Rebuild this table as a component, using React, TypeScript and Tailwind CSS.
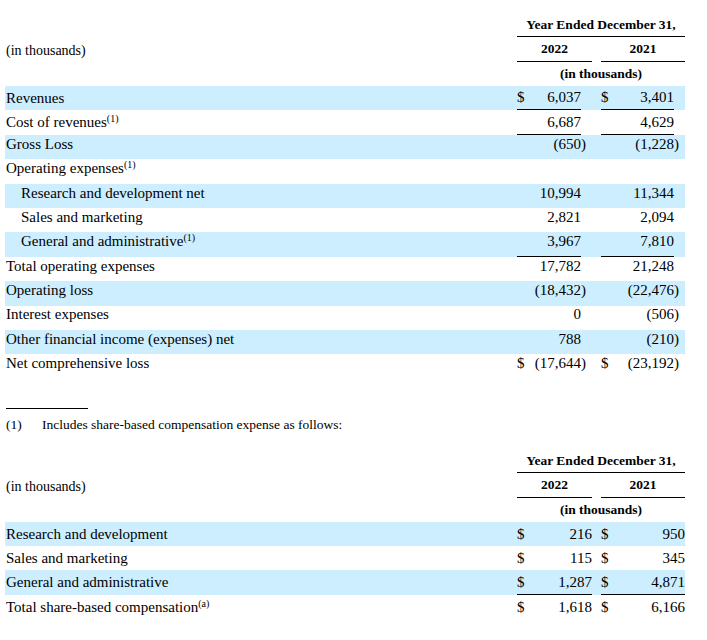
import React from 'react';

type Val = { s?: boolean; v: string; neg?: boolean; ul?: boolean };
type Row = { label: string; sup?: string; indent?: boolean; a?: Val; b?: Val };

const mainRows: Row[] = [
  { label: 'Revenues', a: { s: true, v: '6,037', ul: true }, b: { s: true, v: '3,401', ul: true } },
  { label: 'Cost of revenues', sup: '(1)', a: { v: '6,687', ul: true }, b: { v: '4,629', ul: true } },
  { label: 'Gross Loss', a: { v: '(650', neg: true }, b: { v: '(1,228', neg: true } },
  { label: 'Operating expenses', sup: '(1)' },
  { label: 'Research and development net', indent: true, a: { v: '10,994' }, b: { v: '11,344' } },
  { label: 'Sales and marketing', indent: true, a: { v: '2,821' }, b: { v: '2,094' } },
  { label: 'General and administrative', sup: '(1)', indent: true, a: { v: '3,967', ul: true }, b: { v: '7,810', ul: true } },
  { label: 'Total operating expenses', a: { v: '17,782' }, b: { v: '21,248' } },
  { label: 'Operating loss', a: { v: '(18,432', neg: true }, b: { v: '(22,476', neg: true } },
  { label: 'Interest expenses', a: { v: '0' }, b: { v: '(506', neg: true } },
  { label: 'Other financial income (expenses) net', a: { v: '788' }, b: { v: '(210', neg: true } },
  { label: 'Net comprehensive loss', a: { s: true, v: '(17,644', neg: true }, b: { s: true, v: '(23,192', neg: true } },
];

const sbcRows: Row[] = [
  { label: 'Research and development', a: { s: true, v: '216' }, b: { s: true, v: '950' } },
  { label: 'Sales and marketing', a: { s: true, v: '115' }, b: { s: true, v: '345' } },
  { label: 'General and administrative', a: { s: true, v: '1,287', ul: true }, b: { s: true, v: '4,871', ul: true } },
  { label: 'Total share-based compensation', sup: '(a)', a: { s: true, v: '1,618' }, b: { s: true, v: '6,166' } },
];

const Header = () => (
  <div className="ml-[5px] w-[680px] text-[13.5px] font-bold">
    <div className="flex h-[25px]">
      <div className="w-[512px]" />
      <div className="flex w-[168px] items-center justify-center border-b border-black pt-[3px]">Year Ended December 31,</div>
    </div>
    <div className="flex h-[25px]">
      <div className="flex w-[512px] items-center pl-[1px] pt-[2px] text-[14px] font-normal">(in thousands)</div>
      <div className="flex w-[75px] items-center justify-center border-b border-black pt-[1px]">2022</div>
      <div className="w-[9px]" />
      <div className="flex w-[84px] items-center justify-center border-b border-black pt-[1px]">2021</div>
    </div>
    <div className="flex h-[24px]">
      <div className="w-[512px]" />
      <div className="flex w-[168px] items-center justify-center pt-[1px]">(in thousands)</div>
    </div>
  </div>
);

const Cell = ({ val, inner, slot, lift }: { val?: Val; inner: string; slot: boolean; lift: string }) => (
  <div className="flex h-full">
    <div className={`flex h-full ${inner} items-center justify-between ${lift} ${val?.ul ? 'border-b border-black' : ''}`}>
      <span>{val?.s ? '$' : ''}</span>
      <span>{val?.v}</span>
    </div>
    {slot && <div className={`flex h-full w-[11px] items-center ${lift}`}>{val?.neg ? ')' : ''}</div>}
  </div>
);

const Table = ({ rows, slot, liftFrom }: { rows: Row[]; slot: boolean; liftFrom: number }) => (
  <div className="ml-[5px] w-[680px] text-[15px]">
    {rows.map((r, i) => {
      const lift = i >= liftFrom ? 'pb-[6px]' : '';
      return (
        <div key={i} className={`flex h-[24.4px] ${i % 2 === 0 ? 'bg-[#cceeff]' : ''}`}>
          <div className={`flex w-[512px] items-center ${lift} ${r.indent ? 'pl-[16px]' : 'pl-[1px]'}`}>
            <span>
              {r.label}
              {r.sup && <sup className="text-[10px]">{r.sup}</sup>}
            </span>
          </div>
          <Cell val={r.a} inner={slot ? 'w-[64px]' : 'w-[75px]'} slot={slot} lift={lift} />
          <div className="w-[9px]" />
          <Cell val={r.b} inner={slot ? 'w-[73px]' : 'w-[84px]'} slot={slot} lift={lift} />
        </div>
      );
    })}
  </div>
);

export default function App() {
  return (
    <div className="min-h-[640px] w-[707px] bg-white pt-[12px] font-['Liberation_Serif',serif] text-black">
      <Header />
      <Table rows={mainRows} slot liftFrom={2} />
      <div className="ml-[6px] mt-[29px] h-px w-[82px] bg-black" />
      <div className="ml-[6px] mt-[7px] flex h-[18px] items-center text-[13.5px]">
        <span className="w-[36px]">(1)</span>
        <span>Includes share-based compensation expense as follows:</span>
      </div>
      <div className="mt-[14px]">
        <Header />
        <Table rows={sbcRows} slot={false} liftFrom={99} />
      </div>
    </div>
  );
}
